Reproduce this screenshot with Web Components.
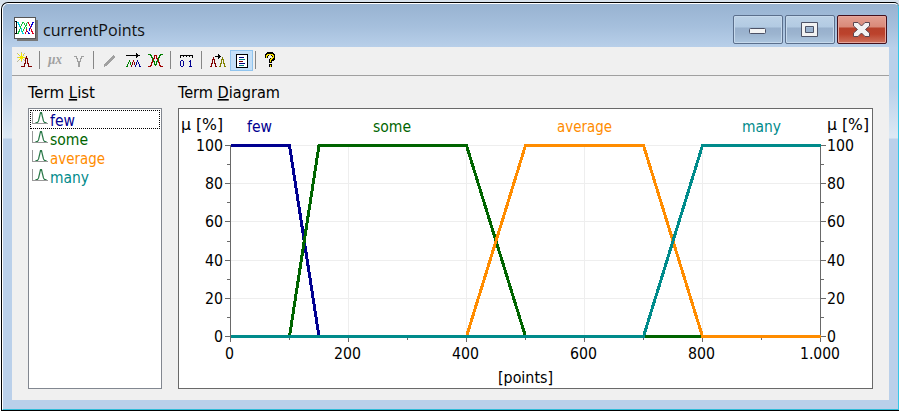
<!DOCTYPE html>
<html lang="en"><head><meta charset="utf-8"><title>currentPoints</title>
<style>html,body{margin:0;width:899px;height:413px;overflow:hidden;background:#fff}</style></head>
<body><app-window></app-window>
<script>
const define=(name,html)=>customElements.define(name,class extends HTMLElement{
  constructor(){super();this.attachShadow({mode:'open'}).innerHTML=html(this);}
});
const FONT="'DejaVu Sans Condensed','DejaVu Sans',sans-serif";

/* Text fitted to a fixed width; u = index of the underlined access key */
customElements.define('fit-text',class extends HTMLElement{
  connectedCallback(){
    const w=+this.getAttribute('w'),t=this.getAttribute('text'),u=this.getAttribute('u');
    const f=this.getAttribute('font')||FONT,s=this.getAttribute('size')||16;
    const body=u===null?t:t.slice(0,+u)+'<tspan text-decoration="underline">'+t[+u]+'</tspan>'+t.slice(+u+1);
    this.attachShadow({mode:'open'}).innerHTML=`<style>:host{display:block;flex:none;width:${w}px;height:20px}svg{display:block;overflow:visible}</style>
    <svg width="${w}" height="20"><text x="0" y="15" font-family="${f}" font-size="${s}" fill="currentColor" textLength="${w}" lengthAdjust="spacingAndGlyphs">${body}</text></svg>`;
  }
});

const P=(c,d,w=1)=>`<path d="${d}" stroke="${c}" stroke-width="${w}" fill="none"/>`;
const INK={k:'#000',g:'#008000',r:'#a00000',m:'#800000',b:'#000090',o:'#808000',a:'#a0a0a0',y:'#f4e800',l:'#b8b8a0',c:'#00d8e8',G:'#10c040',R:'#e00020',B:'#0000d8'};
/* Pixel art: each letter is one pixel of that ink */
const bits=(x0,y0,rows)=>rows.trim().split(/\s+/).map((r,y)=>[...r].map((c,x)=>INK[c]?`<path d="M${x0+x} ${y0+y}h1v1h-1z" fill="${INK[c]}"/>`:'').join('')).join('');
const ICONS={
  create:bits(2,1,`
....l.....
l...y..l..
.y..y.y...
..l.y.l...
...yyy....
lyyyyyyyl.
...yyy....
..y.y.l...
.l..y..l..
l...l.....`)+bits(4,5,`
.......m.....
.......m.....
......mmm....
......m.m....
......m.m....
......m.m....
......m.m....
.....mm.mm...
.....m...m...
.....m...m...
..mmmm...mmmm`),
  mux:`<text x="1" y="13" font-family="'Liberation Serif',serif" font-size="15" font-style="italic" font-weight="bold" fill="#a0a0a0" textLength="14" lengthAdjust="spacingAndGlyphs">µx</text>`,
  notch:bits(4,5,`
aaa....aaa
..a....a..
..aa..aa..
...a..a...
...a..a...
...aaaa...
....aa....
....aa....
....aa....
....aa....
....aa....`),
  pencil:`<path d="M3 16v-3l9-9 3 2-10 9z" fill="#a0a0a0"/>`,
  shift:bits(0,2,`
..........k....
..........kk...
kkkkkkkkkkkkkk.
..........kk...
..........k....
...............
...............
...g...r...b...
...g...r...b...
..g.g.m.r.b.b..
..g.g.m.m.b.b..
.g..g.m.m.b..b.
.g...m...b...b.
gg...m...b...bb`),
  cross:bits(1,3,`
ggg.........ggg
..gg..rrr..gg..
...g..r.r..g...
...gg.r.r.gg...
....grr.rrg....
....gr...rg....
....rg...gr....
....rgg.ggr....
...rr.g.g.rr...
...r..g.g..r...
...r..ggg..r...
..rr...g...rr..
rrr.........rrr`),
  range:bits(2,4,`
kkkkkkkkkkkkk
k..k..k..k..k
k...........k
............
............
.bb.......b.
b..b.....bb.
b..b......b.
b..b......b.
b..b......b.
b..b......b.
.bb......bbb`),
  copy:bits(0,3,`
........k.......
........kk......
.....kkkkkk.....
...m....kk..o...
...m....k...o...
..mmm......ooo..
..m.m......o.o..
..m.m......o.o..
..m.m......o.o..
.mm.mm....oo.oo.
.m...m....o...o.
.m...m....o...o.
mm...mm..oo...oo`),
  list:'<path d="M3.500 2.500h11v13h-11z" fill="#fff" stroke="#000"/>'+P('#000080','M6 5.500h5M6 11.500h6')+P('#008080','M6 7.500h6M6 13.500h5')+P('#800000','M6 9.500h4'),
  help:P('#000','M4.500 6.500v-2l2-2h3l2 2v3l-3 2v2M8.500 13v3',3.500)+P('#ffe600','M4.500 6.500v-2l2-1h3l2 1v2l-3 2v2M8.500 13.500v2',1.6),
  term:'<g shape-rendering="auto">'+P('#999','M.5 0v12M0 11.500h16')+P('#2c7a4a','M3.500 10.500h2l1-1.500 1-4 1-4.500h1l1 4.500 1 4 1 1.500h2',1.2)+'</g>',
  app:'<path d="M.5.500h21v21H.5z" fill="#fff" stroke="#555"/><path d="M22.500 3v20H3" fill="none" stroke="#777" stroke-width="2"/>'+P('#000','M2.500 4v13M1 4.500h2M1 10.500h2M1 16.500h2')+bits(3,5,`
cc...GG...GR...BB
.c...G.G.G.R...B.
.cc.G..G.G..R.BB.
..c.G...GG..R.B..
..cG....G....RB..
...G...G.G...B...
...Gc..G.G..BR...
..G.c.G..R..B.R..
..G.c.G..R..B.R..
.GG.cG...RB...RR.
.G...c..R..B...R.
GG...cc.R..BB..RR`)
};
customElements.define('pixel-icon',class extends HTMLElement{
  connectedCallback(){
    const n=this.getAttribute('name'),s=n==='app'?24:18;
    this.attachShadow({mode:'open'}).innerHTML=`<style>:host{display:block;flex:none;width:${s}px;height:${s}px}svg{display:block;overflow:visible}</style><svg width="${s}" height="${s}" shape-rendering="crispEdges">${ICONS[n]}</svg>`;
  }
});

define('caption-button',el=>{
  const k=el.getAttribute('kind');
  const red=k==='close';
  const g={
    min:'<rect x="16.500" y="13.500" width="16" height="5" rx="1" fill="#f4f4f4" stroke="#4d5266"/>',
    max:'<path d="M16.500 7.500h16v14h-16zM20.500 11.500v6h8v-6z" fill="#f2f2f2" fill-rule="evenodd" stroke="#4d5266"/>',
    close:'<path d="M16.500 7.500h4.500l3.500 3.500 3.500-3.500h4.500v3.500l-4 3.500 4 3.500v3.500h-4.500l-3.500-3.500-3.500 3.500h-4.500v-3.500l4-3.500-4-3.500z" fill="#f2f2f2" stroke="#5a4650"/>'}[k];
  return `<style>:host{box-sizing:border-box;display:block;width:50px;height:29px;border:1px solid ${red?'#43101c':'#5b6f8c'};border-radius:2px;
  box-shadow:inset 0 0 0 1px ${red?'#e7a69c':'#c6d9ec'};background:${red?'linear-gradient(#e3a093,#d98978 11px,#b7412b 12px,#bc422c 18px,#cd725d)':'linear-gradient(#bdd2e7,#b2cae2 11px,#98b0cc 12px,#9cb4cf 18px,#adc6df)'}}svg{display:block;margin:-1px}</style><svg width="50" height="29">${g}</svg>`;
});

define('title-bar',()=>`<style>:host{display:flex;box-sizing:border-box;height:43px;padding:11px 11px 0 11px;color:#111}
fit-text{margin:6px 0 0 5px}nav{display:flex;gap:2px;margin-left:auto}pixel-icon{margin-top:2px}</style>
<pixel-icon name="app"></pixel-icon><fit-text text="currentPoints" w="102" size="16.500" font="'Open Sans','Noto Sans',sans-serif"></fit-text>
<nav><caption-button kind="min"></caption-button><caption-button kind="max"></caption-button><caption-button kind="close"></caption-button></nav>`);

define('tool-bar',()=>`<style>:host{box-sizing:border-box;display:flex;align-items:center;height:29px;padding:0 0 2px 3px;border-bottom:1px solid #a0a0a0}
i{width:1px;height:18px;background:#868686;flex:none}.on{box-sizing:border-box;width:23px;height:21px;background:#c5e0f8;border:1px solid #90c4ee;padding:1px 2px}</style>
<pixel-icon name="create"></pixel-icon><i style="margin-left:6px"></i>
<pixel-icon name="mux" style="margin-left:7px"></pixel-icon><pixel-icon name="notch" style="margin-left:5px"></pixel-icon><i style="margin-left:5px"></i>
<pixel-icon name="pencil" style="margin-left:7px"></pixel-icon><pixel-icon name="shift" style="margin-left:7px"></pixel-icon><pixel-icon name="cross" style="margin-left:3px"></pixel-icon><i style="margin-left:5px"></i>
<pixel-icon name="range" style="margin-left:7px"></pixel-icon><i style="margin-left:5px"></i>
<pixel-icon name="copy" style="margin-left:8px"></pixel-icon><div class="on" style="margin-left:2px"><pixel-icon name="list"></pixel-icon></div><i style="margin-left:2px"></i>
<pixel-icon name="help" style="margin-left:6px"></pixel-icon>`);

define('term-item',el=>`<style>:host{box-sizing:border-box;display:flex;height:19px;padding-left:3px;color:${el.getAttribute('color')};border:1px dotted transparent}
:host([selected]){border-color:#000}pixel-icon{margin-top:1px}</style>
<pixel-icon name="term" style="margin-left:-2px"></pixel-icon><fit-text text="${el.getAttribute('name')}" w="${el.getAttribute('w')}"></fit-text>`);

define('term-list',()=>`<style>:host{box-sizing:border-box;display:block;width:134px;height:281px;background:#fff;border:1px solid #828790;padding:1px}</style>
<term-item name="few" w="25" color="#000090" selected></term-item><term-item name="some" w="38" color="#006400"></term-item>
<term-item name="average" w="55" color="#ff8c00"></term-item><term-item name="many" w="39" color="#008b8b"></term-item>`);

define('term-diagram',()=>{
  const X=v=>51+v*.59, Y=v=>227.500-v*1.91;
  let s='',t='';
  const T=(x,y,w,str,c='#000')=>t+=`<text x="${x}" y="${y}" textLength="${w}" lengthAdjust="spacingAndGlyphs" fill="${c}">${str}</text>`;
  for(let v=200;v<=800;v+=200)s+=P('#eee',`M${Math.round(X(v))+.5} 37V227`);
  for(let v=20;v<=100;v+=20)s+=P('#eee',`M52 ${Math.round(Y(v)-.5)+.5}H641`);
  s+=P('#696969','M51.500 36V228M641.500 36V228');
  for(let v=0;v<=100;v+=10){const y=Math.round(Y(v)-.5)+.5,l=v%20?3:5;s+=P('#696969',`M${51-l} ${y}h${l}M642 ${y}h${l}`);}
  for(let v=0;v<=1000;v+=100)s+=P('#696969',`M${Math.round(X(v))+.5} 227v${v%200?4:6}`);
  [['#000090',[[0,100],[100,100],[150,0],[1000,0]]],['#006400',[[0,0],[100,0],[150,100],[400,100],[500,0],[1000,0]]],
   ['#ff8c00',[[0,0],[400,0],[500,100],[700,100],[800,0],[1000,0]]],['#008b8b',[[0,0],[700,0],[800,100],[1000,100]]]]
   .forEach(([c,p])=>s+=`<polyline points="${p.map(([x,y])=>X(x)+.5+','+Y(y)).join(' ')}" fill="none" stroke="${c}" stroke-width="3" stroke-linejoin="round"/>`);
  T(2,21,42,'µ [%]');T(648,21,42,'µ [%]');
  T(68,23,25,'few','#000090');T(194,23,38,'some','#006400');T(378,23,55,'average','#ff8c00');T(563,23,39,'many','#008b8b');
  [[100,27],[80,18],[60,18],[40,18],[20,18],[0,9]].forEach(([v,w])=>{const y=Math.round(Y(v)-.5)+6;T(44-w,y,w,v);T(648,y,w,v)});
  [[46,9,'0'],[155,27,'200'],[273,27,'400'],[391,27,'600'],[509,27,'800'],[621,40,'1.000']].forEach(([x,w,v])=>T(x,250,w,v));
  T(319,274,55,'[points]');
  return `<style>:host{box-sizing:border-box;display:block;width:695px;height:281px;background:#fff;border:1px solid #696969}svg{display:block;overflow:visible}</style>
  <svg width="693" height="279"><g shape-rendering="crispEdges">${s}</g><g font-family="${FONT}" font-size="16">${t}</g></svg>`;
});

define('app-window',()=>`<style>:host{display:block;box-sizing:border-box;width:899px;height:413px;padding:2px 0 2px 1px;background:linear-gradient(#d8e2ec 0 4px,#fff 8px)}
.w{box-sizing:border-box;height:409px;border:solid #000;border-width:1px 0 1px 1px;border-radius:7px 5px 0 0;overflow:hidden;background:#bad0ea}
.f{box-sizing:border-box;height:407px;border:1px solid #fff;border-right-color:#35c8e8;border-bottom-color:#30bcd8;border-radius:6px 5px 0 0;padding:0 9px 9px 9px;
background:linear-gradient(#98b3d1,#a5bfdc 22px,#b9d0ea 44px,#b9d0ea 84px,#dce8f4 132px,#dce8f4 134px,#bad0ea 135px)}
title-bar{margin:0 -9px}.c{height:353px;background:#f0f0f0}
main{display:grid;grid-template-columns:134px 695px;column-gap:16px;row-gap:5px;padding:7px 0 0 16px;color:#000}</style>
<div class="w"><div class="f"><title-bar></title-bar><div class="c"><tool-bar></tool-bar><main>
<fit-text text="Term List" w="67" u="5"></fit-text><fit-text text="Term Diagram" w="102" u="5"></fit-text>
<term-list></term-list><term-diagram></term-diagram></main></div></div></div>`);
</script></body></html>
